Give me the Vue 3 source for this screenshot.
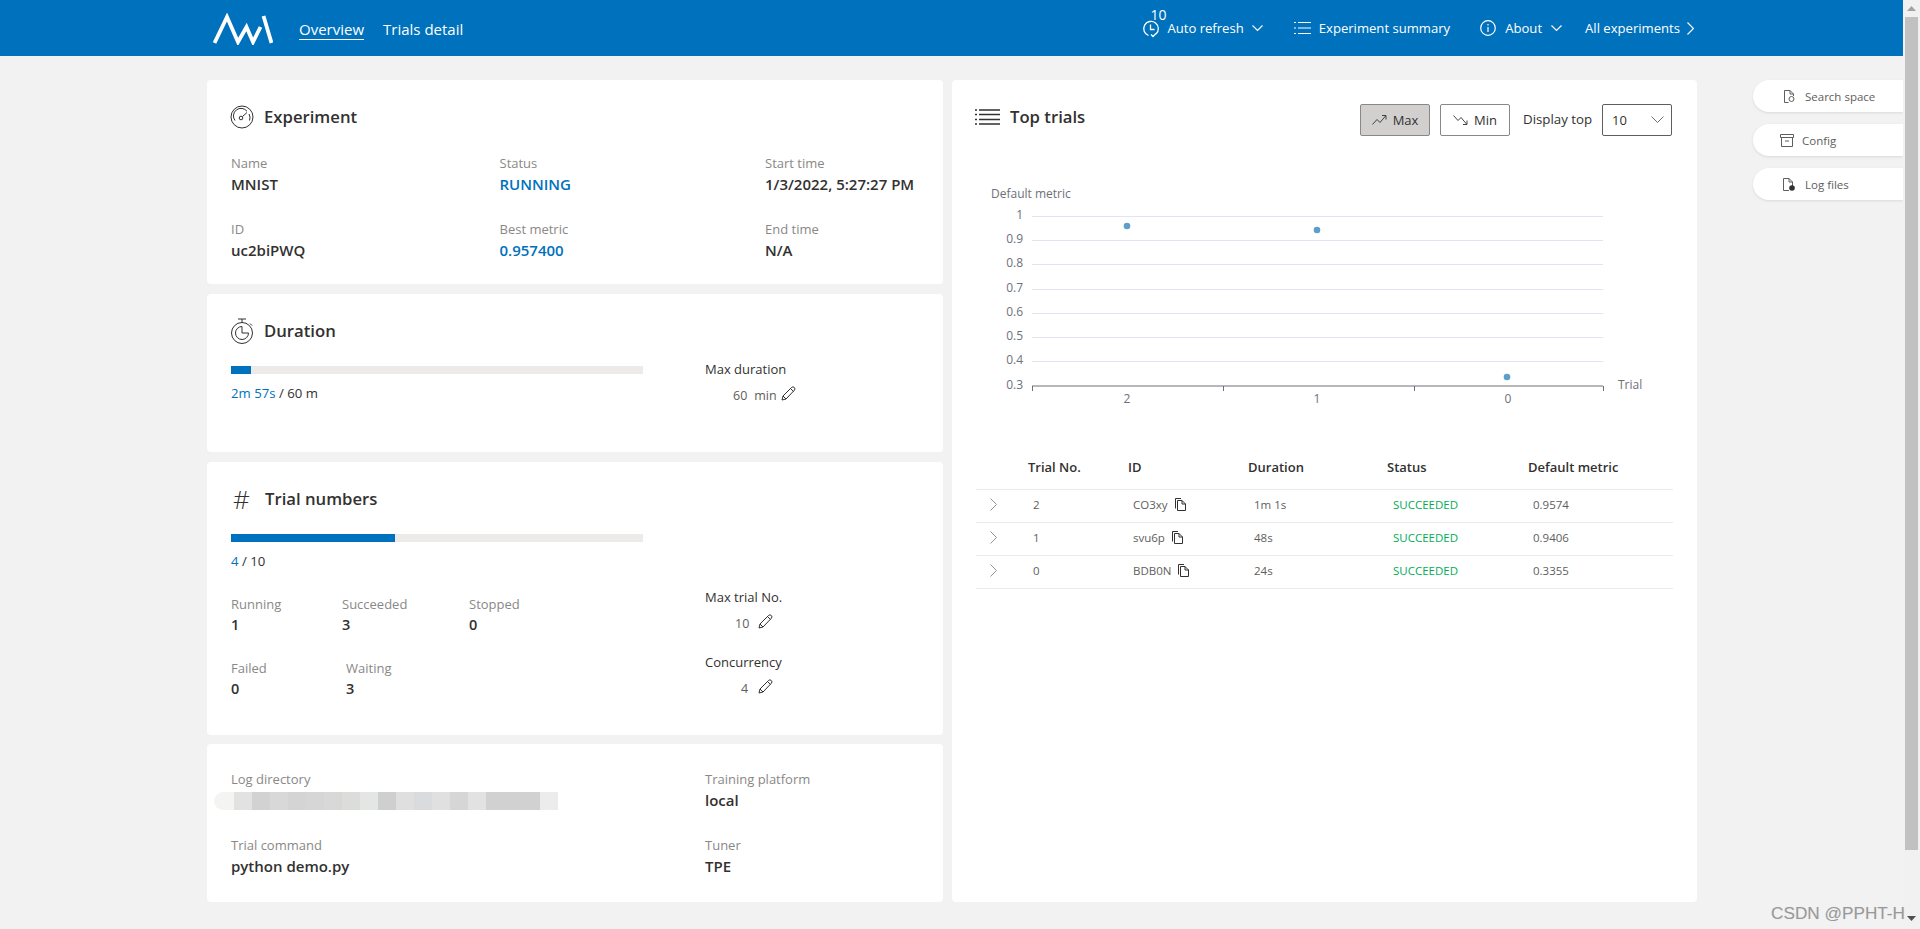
<script setup>
const yTicks = [['1',216],['0.9',240],['0.8',264],['0.7',289],['0.6',313],['0.5',337],['0.4',361]].map(([t,y])=>({t,y:y-175}))
const xTicks = [56,247,438,627]
const points = [[151,51],[341,55],[531,202]]
const xLabels = [['2',151],['1',341],['0',532]]
const rows = [
  {no:'2',id:'CO3xy',dur:'1m 1s',m:'0.9574'},
  {no:'1',id:'svu6p',dur:'48s',m:'0.9406'},
  {no:'0',id:'BDB0N',dur:'24s',m:'0.3355'},
]
const blur = ['#f4f4f3','#e2e2e2','#d2d2d2','#d8d8d8','#d4d4d4','#d6d6d6','#d8d8d8','#dcdcda','#e4e6e5','#cfcfcf','#dfdfdf','#d9dbdd','#e0e0e0','#d6d6d6','#e2e2e2','#d0d1d0','#d0d1d0','#d0d1d0','#ececec']
</script>

<template>
  <div class="root">
    <div class="main">
      <header class="head">
        <svg class="logo" width="60" height="32" viewBox="0 0 60 32" fill="none" stroke="#fff" stroke-width="3.8">
          <path d="M1.500 30 L14 4 L25 29 L33.500 14 L40 29 L47.500 14"/>
          <path d="M50.500 3 L58.500 30"/>
        </svg>
        <a class="nav active">Overview</a>
        <a class="nav">Trials detail</a>
        <div class="head-right">
          <div class="refresh">
            <span class="badge">10</span>
            <svg width="18" height="18" viewBox="0 0 18 18" fill="none" stroke="#fff" stroke-width="1.300"><path d="M6.500 15.500A7.300 7.300 0 1 1 14 14M8.500 4.500V9.500H12.500M9 14.500l2 2 3-3"/></svg>
            <span class="ht">Auto refresh</span>
            <svg class="chev" width="11" height="7" viewBox="0 0 11 7" fill="none" stroke="#fff" stroke-width="1.200"><path d="M.5.500l5 5 5-5"/></svg>
          </div>
          <div class="hitem summary">
            <svg width="17" height="14" viewBox="0 0 17 14" fill="none" stroke="#fff"><path d="M4 1.500H17M4 7H17M4 12.500H17M0 1.500H2M0 7H2M0 12.500H2"/></svg>
            <span class="ht">Experiment summary</span>
          </div>
          <div class="hitem about">
            <svg width="16" height="16" viewBox="0 0 16 16" fill="none" stroke="#fff" stroke-width="1.200"><circle cx="8" cy="8" r="7.300"/><path d="M8 7v5M8 4v1.500"/></svg>
            <span class="ht">About</span>
            <svg class="chev" width="11" height="7" viewBox="0 0 11 7" fill="none" stroke="#fff" stroke-width="1.200"><path d="M.5.500l5 5 5-5"/></svg>
          </div>
          <div class="hitem all">
            <span class="ht">All experiments</span>
            <svg width="7" height="13" viewBox="0 0 7 13" fill="none" stroke="#fff" stroke-width="1.200"><path d="M.5.500l6 6-6 6"/></svg>
          </div>
        </div>
      </header>

      <div class="content">
        <div class="left">
          <section class="card c-exp">
            <div class="title">
              <svg class="ticon" width="24" height="24" viewBox="0 0 24 24" fill="none" stroke="#323130"><circle cx="12" cy="12" r="11"/><path d="M5 15.500A7.500 7.500 0 0 1 17 6.300M19 9a7.500 7.500 0 0 1 .5 6.500"/><circle cx="11" cy="13" r="1.800"/><path d="M12.500 11.500L17 7.500"/></svg>
              <h2>Experiment</h2>
            </div>
            <div class="exp-grid">
              <div class="kv"><span class="k">Name</span><span class="v">MNIST</span></div>
              <div class="kv"><span class="k">Status</span><span class="v blue">RUNNING</span></div>
              <div class="kv"><span class="k">Start time</span><span class="v">1/3/2022, 5:27:27 PM</span></div>
              <div class="kv"><span class="k">ID</span><span class="v">uc2biPWQ</span></div>
              <div class="kv"><span class="k">Best metric</span><span class="v blue">0.957400</span></div>
              <div class="kv"><span class="k">End time</span><span class="v">N/A</span></div>
            </div>
          </section>

          <section class="card c-dur">
            <div class="title">
              <svg class="ticon" width="24" height="26" viewBox="0 0 24 26" fill="none" stroke="#323130"><circle cx="12" cy="15" r="10.500"/><path d="M12 8.500A6.500 6.500 0 1 0 18.500 15H12zM8 1h8M12 1v3.500M20 5.500l2 2"/></svg>
              <h2>Duration</h2>
            </div>
            <div class="body">
              <div class="lcol">
                <div class="bar"><div class="fill" style="width:20px"></div></div>
                <div class="prog"><span class="blue">2m 57s</span> / 60 m</div>
              </div>
              <div class="rcol rcol-dur">
                <div class="lab">Max duration</div>
                <div class="edit e-dur"><span>60</span><span class="min">min</span>
                  <svg class="pen" width="15" height="15" viewBox="0 0 15 15" fill="none" stroke="#323130"><path d="M1 14l1-4 8.500-8.500a1.700 1.700 0 0 1 2.800 2.800L5 13zM2 10l3 3M9.500 2.500l3 3"/></svg>
                </div>
              </div>
            </div>
          </section>

          <section class="card c-num">
            <div class="title">
              <span class="hash">#</span>
              <h2>Trial numbers</h2>
            </div>
            <div class="body">
              <div class="lcol">
                <div class="bar"><div class="fill" style="width:164px"></div></div>
                <div class="prog"><span class="blue">4</span> / 10</div>
                <div class="stats s1">
                  <div class="kv w111"><span class="k">Running</span><span class="v n">1</span></div>
                  <div class="kv w127"><span class="k">Succeeded</span><span class="v n">3</span></div>
                  <div class="kv"><span class="k">Stopped</span><span class="v n">0</span></div>
                </div>
                <div class="stats s2">
                  <div class="kv w115"><span class="k">Failed</span><span class="v n">0</span></div>
                  <div class="kv"><span class="k">Waiting</span><span class="v n">3</span></div>
                </div>
              </div>
              <div class="rcol rcol-num">
                <div class="lab">Max trial No.</div>
                <div class="edit e-num"><span>10</span>
                  <svg class="pen p2" width="15" height="15" viewBox="0 0 15 15" fill="none" stroke="#323130"><path d="M1 14l1-4 8.500-8.500a1.700 1.700 0 0 1 2.800 2.800L5 13zM2 10l3 3M9.500 2.500l3 3"/></svg>
                </div>
                <div class="lab conc">Concurrency</div>
                <div class="edit e-con"><span>4</span>
                  <svg class="pen p2" width="15" height="15" viewBox="0 0 15 15" fill="none" stroke="#323130"><path d="M1 14l1-4 8.500-8.500a1.700 1.700 0 0 1 2.800 2.800L5 13zM2 10l3 3M9.500 2.500l3 3"/></svg>
                </div>
              </div>
            </div>
          </section>

          <section class="card c-log">
            <div class="log-grid">
              <div class="kv">
                <span class="k">Log directory</span>
                <div class="blur"><i v-for="(c,i) in blur" :key="i" :style="{background:c}"></i></div>
              </div>
              <div class="kv"><span class="k">Training platform</span><span class="v">local</span></div>
              <div class="kv"><span class="k">Trial command</span><span class="v">python demo.py</span></div>
              <div class="kv"><span class="k">Tuner</span><span class="v">TPE</span></div>
            </div>
          </section>
        </div>

        <section class="card c-top">
          <div class="top-row">
            <div class="title t3">
              <svg width="25" height="16" viewBox="0 0 25 16" fill="none" stroke="#323130" stroke-width="1.300"><path d="M4 1h21M4 5.500h21M4 10.500h21M4 15h21M0 1h2M0 5.500h2M0 10.500h2M0 15h2" /></svg>
              <h2>Top trials</h2>
            </div>
            <div class="controls">
              <button class="btn on">
                <svg width="15" height="10" viewBox="0 0 15 10" fill="none" stroke="#323130" stroke-width=".9"><path d="M.5 9.500l4.500-5 3 3L13.500 1M10 .5h4v4"/></svg>
                Max
              </button>
              <button class="btn">
                <svg width="15" height="10" viewBox="0 0 15 10" fill="none" stroke="#323130" stroke-width=".9"><path d="M.5.500l4.500 5 3-3L13.500 9M10 9.500h4v-4"/></svg>
                Min
              </button>
              <span class="dtop">Display top</span>
              <div class="select"><span>10</span>
                <svg width="13" height="8" viewBox="0 0 13 8" fill="none" stroke="#605e5c" stroke-width=".9"><path d="M.5.500l6 6 6-6"/></svg>
              </div>
            </div>
          </div>

          <svg class="chart" width="697" height="270" viewBox="0 0 697 270">
            <text x="15" y="23" class="ct">Default metric</text>
            <g v-for="t in yTicks" :key="t.t">
              <line x1="56" x2="627" :y1="t.y+.5" :y2="t.y+.5" stroke="#e0e6f1"/>
              <text x="47" :y="t.y+3" text-anchor="end" class="ct">{{ t.t }}</text>
            </g>
            <text x="47" y="214" text-anchor="end" class="ct">0.3</text>
            <line x1="56" x2="627" y1="211" y2="211" stroke="#6e7079"/>
            <line v-for="x in xTicks" :key="x" :x1="x+.5" :x2="x+.5" y1="211" y2="216" stroke="#6e7079"/>
            <text v-for="l in xLabels" :key="l[0]" :x="l[1]" y="228" text-anchor="middle" class="ct">{{ l[0] }}</text>
            <text x="642" y="214" class="ct">Trial</text>
            <circle v-for="(p,i) in points" :key="i" :cx="p[0]" :cy="p[1]" r="3.300" fill="#5c9fc8"/>
          </svg>

          <div class="thead">
            <span class="c0"></span><span class="c1">Trial No.</span><span class="c2">ID</span><span class="c3">Duration</span><span class="c4">Status</span><span>Default metric</span>
          </div>
          <div v-for="r in rows" :key="r.no" class="trow">
            <span class="c0"><svg width="7" height="13" viewBox="0 0 7 13" fill="none" stroke="#8a8886" stroke-width=".9"><path d="M.5.500l6 6-6 6"/></svg></span>
            <span class="c1 pl">{{ r.no }}</span>
            <span class="c2 pl idc">{{ r.id }}
              <svg width="11" height="13" viewBox="0 0 11 13" fill="none" stroke="#323130"><path d="M2.500 2.500H7l3.500 3.500v6.500h-8zM.5 10.500V.5H6M7 2.500V6h3.500"/></svg>
            </span>
            <span class="c3 pl2">{{ r.dur }}</span>
            <span class="c4 pl2 ok">SUCCEEDED</span>
            <span class="pl">{{ r.m }}</span>
          </div>
        </section>

        <aside class="side">
          <div class="sbtn b1">
            <svg width="11" height="13" viewBox="0 0 11 13" fill="none" stroke="#605e5c"><path d="M4.500 12.500H.5V.5H6l3.500 3.500v2M6 .5V4h3.500"/><circle cx="7.500" cy="9" r="2.500"/></svg>
            <span>Search space</span>
          </div>
          <div class="sbtn b2">
            <svg width="14" height="13" viewBox="0 0 14 13" fill="none" stroke="#605e5c"><path d="M.5.500h13v3H.5zM1.500 3.500v9h11v-9M5 7h4"/></svg>
            <span>Config</span>
          </div>
          <div class="sbtn b3">
            <svg width="12" height="13" viewBox="0 0 12 13" fill="#323130" stroke="none"><path fill="none" stroke="#605e5c" d="M6 12.500H.5V.5H6l3.500 3.500v4M6 .5V4h3.500"/><circle cx="9" cy="10" r="2.800"/></svg>
            <span>Log files</span>
          </div>
        </aside>
      </div>
    </div>

    <div class="scroll">
      <svg class="arr-up" width="9" height="5" viewBox="0 0 9 5"><path d="M4.500 0L9 5H0z" fill="#a3a3a3"/></svg>
      <div class="thumb"></div>
      <svg class="arr-down" width="9" height="5" viewBox="0 0 9 5"><path d="M4.500 5L9 0H0z" fill="#505050"/></svg>
    </div>
    <div class="mark">CSDN @PPHT-H</div>
  </div>
</template>

<style>
html, body { margin: 0; overflow: hidden; }
</style>

<style scoped>
.root { display: flex; width: 1920px; height: 929px; overflow: hidden; position: relative; background: #f2f2f2; font-family: "Open Sans", "Noto Sans", sans-serif; font-size: 13px; color: #323130; }
.main { width: 1903px; flex: none; }
.head { height: 56px; background: #0071bc; display: flex; align-items: center; color: #fff; }
.logo { margin-left: 213px; flex: none; margin-top: 1px; }
.nav { font-size: 15px; line-height: 20px; margin-left: 26px; border-bottom: 1px solid transparent; margin-top: 2px; }
.nav + .nav { margin-left: 19px; }
.active { border-bottom-color: #fff; }
.head-right { margin-left: auto; display: flex; align-items: center; padding-right: 209px; }
.ht { font-size: 13.100px; line-height: 20px; }
.refresh { display: flex; align-items: center; position: relative; }
.refresh svg:first-of-type { margin-right: 7px; margin-top: 1px; margin-left: 1px; }
.badge { position: absolute; left: 9px; top: -11px; font-size: 14px; line-height: 16px; }
.chev { margin-left: 9px; }
.refresh .chev { margin-left: 8px; }
.hitem { display: flex; align-items: center; }
.summary { margin-left: 31px; }
.summary svg { margin-right: 8px; }
.about { margin-left: 30px; }
.about svg:first-child { margin-right: 9px; }
.all { margin-left: 23px; }
.all svg { margin-left: 7px; }

.content { display: flex; align-items: flex-start; padding: 24px 0 0 207px; }
.left { width: 736px; flex: none; display: flex; flex-direction: column; }
.card { background: #fff; border-radius: 4px; box-sizing: border-box; }
.c-exp { height: 204px; padding: 25px 0 0 24px; margin-bottom: 10px; }
.c-dur { height: 158px; padding: 25px 0 0 24px; margin-bottom: 10px; }
.c-num { height: 273px; padding: 25px 0 0 24px; margin-bottom: 9px; }
.c-log { height: 158px; padding: 24.500px 0 0 24px; }
.title { display: flex; align-items: center; height: 24px; }
.ticon { margin-left: -1px; flex: none; }
.title h2 { margin: 0 0 0 10px; font-size: 16.700px; font-weight: 600; line-height: 24px; color: #323130; }
.hash { width: 23px; margin-left: 2px; margin-right: -2px; font-size: 26px; font-weight: 300; line-height: 24px; font-family: "Open Sans", sans-serif; flex: none; text-align: left; color: #323130; }
.c-num .title h2 { margin-left: 11px; }

.kv { display: flex; flex-direction: column; }
.k { font-size: 13px; line-height: 21px; color: #8a8886; white-space: nowrap; }
.v { font-size: 15px; line-height: 21px; font-weight: 600; color: #323130; white-space: nowrap; }
.v.n { font-size: 14.500px; margin-top: -1px; }
.blue { color: #0071bc !important; }

.exp-grid { display: grid; grid-template-columns: 268.500px 265.500px auto; row-gap: 24px; margin-top: 24px; }
.body { display: flex; }
.lcol { width: 412px; flex: none; padding-top: 23px; }
.bar { height: 8px; background: #edebe9; }
.fill { height: 8px; background: #0071bc; }
.prog { font-size: 13.200px; line-height: 21px; margin-top: 8.500px; }
.rcol { margin-left: 62px; }
.rcol-dur { padding-top: 15.500px; }
.rcol-num { padding-top: 75.500px; }
.lab { font-size: 13px; line-height: 21px; }
.conc { margin-top: 18px; }
.edit { display: flex; align-items: center; font-size: 12.500px; line-height: 21px; margin-top: 5px; color: #605e5c; }
.e-dur { padding-left: 28px; }
.min { margin-left: 7px; }
.pen { margin-left: 4px; margin-top: -3px; }
.pen.p2 { margin-left: 0; }
.e-num { padding-left: 30px; }
.e-num .p2 { margin-left: 9px; margin-top: -4px; }
.e-con { padding-left: 36px; }
.e-con .p2 { margin-left: 10px; margin-top: -4px; }
.stats { display: flex; }
.s1 { margin-top: 22px; }
.s2 { margin-top: 23px; }
.w111 { width: 111px; }
.w127 { width: 127px; }
.w115 { width: 115px; }

.log-grid { display: grid; grid-template-columns: 474px auto; row-gap: 24px; }
.blur { display: flex; height: 18px; margin-left: -17px; margin-top: 2px; }
.blur i { display: block; width: 18px; flex: none; }
.blur i:first-child { width: 20px; border-radius: 9px 0 0 9px; }

.c-top { width: 745px; flex: none; margin-left: 9px; height: 822px; padding: 24px 24px 0; }
.top-row { display: flex; justify-content: space-between; height: 32px; }
.t3 { margin-top: 1px; }
.t3 h2 { margin-left: 10px; }
.t3 svg { margin-left: -1px; }
.controls { display: flex; align-items: center; margin-right: 1px; }
.btn { width: 70px; height: 32px; box-sizing: border-box; background: #fff; border: 1px solid #8a8886; border-radius: 2px; font-family: inherit; font-size: 13px; color: #323130; display: flex; align-items: center; justify-content: center; gap: 6px; padding: 0; margin-right: 10px; }
.on { background: #d2d0ce; }
.dtop { font-size: 13.300px; width: 79px; margin-left: 3px; margin-top: -3px; white-space: nowrap; }
.select { width: 70px; height: 32px; box-sizing: border-box; border: 1px solid #605e5c; border-radius: 2px; display: flex; align-items: center; justify-content: space-between; padding: 0 7px 0 9px; font-size: 13px; }
.chart { display: block; margin-top: 39px; }
.ct { font-size: 12px; fill: #6e7079; font-family: "Open Sans", sans-serif; }

.thead, .trow { display: flex; align-items: center; }
.thead { font-size: 13px; font-weight: 600; border-bottom: 1px solid #edebe9; padding-bottom: 1px; box-sizing: content-box; height: 43px; }
.trow { height: 32px; border-bottom: 1px solid #edebe9; font-size: 11.500px; color: #605e5c; }
.trow .pl, .trow .pl2 { padding-bottom: 4px; }
.c0 { width: 52px; flex: none; display: flex; padding-left: 14px; box-sizing: border-box; margin-top: -3px; }
.c1 { width: 100px; flex: none; }
.c2 { width: 120px; flex: none; }
.c3 { width: 139px; flex: none; }
.c4 { width: 141px; flex: none; }
.pl { padding-left: 5px; box-sizing: border-box; }
.pl2 { padding-left: 6px; box-sizing: border-box; }
.idc { display: flex; align-items: center; gap: 7px; }
.ok { color: #00ad56; }

.side { width: 150px; flex: none; margin-left: 56px; display: flex; flex-direction: column; gap: 12px; }
.sbtn { height: 32px; background: #fff; border-radius: 16px 0 0 16px; box-shadow: 0 1px 3px rgba(0,0,0,.1); display: flex; align-items: center; font-size: 11.500px; color: #605e5c; }
.b1 { padding-left: 31px; gap: 10px; }
.b2 { padding-left: 27px; gap: 8px; }
.b3 { padding-left: 30px; gap: 10px; }

.scroll { width: 17px; flex: none; display: flex; flex-direction: column; align-items: center; background: #f1f1f1; }
.arr-up { margin-top: 6px; flex: none; }
.thumb { width: 13px; height: 833px; margin-top: 6px; background: #c1c1c1; flex: none; }
.arr-down { margin-top: 66px; flex: none; }
.mark { position: absolute; right: 15px; bottom: 6px; font-family: "Liberation Sans", sans-serif; font-size: 17.200px; line-height: 20px; color: #999; text-shadow: 0 0 1px #ddd; }
</style>
